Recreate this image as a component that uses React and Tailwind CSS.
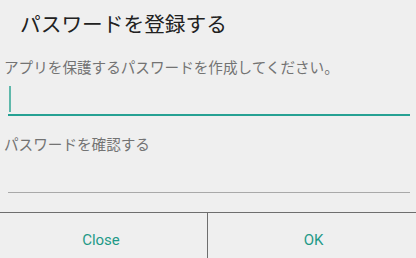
export default function App() {
  return (
    <div
      className="w-[416px] h-[258px] overflow-hidden bg-[#efefef] flex flex-col"
      style={{ fontFamily: '"Noto Sans CJK JP", "Noto Sans", sans-serif' }}
    >
      <div className="shrink-0 pl-[20px] pt-[9px] h-[57px] text-[20.7px] leading-[28px] text-[#212121]">
        パスワードを登録する
      </div>
      <div className="shrink-0 pl-[4px] h-[29px] text-[14.6px] leading-[20px] text-[#737373]">
        アプリを保護するパスワードを作成してください。
      </div>
      <div className="shrink-0 ml-[8px] mr-[6px] flex flex-col">
        <div className="h-[28px] flex items-start">
          <div className="ml-[1px] w-[2px] h-[26px] bg-[#5fb8ab]" />
        </div>
        <div className="h-[2px] bg-[#26a193]" />
      </div>
      <div className="shrink-0 pl-[4px] pt-[18px] h-[76px] text-[14.6px] leading-[20px] text-[#737373]">
        パスワードを確認する
      </div>
      <div className="shrink-0 ml-[8px] mr-[6px] h-px bg-[#a9a9a9]" />
      <div className="shrink-0 h-[19px]" />
      <div className="shrink-0 h-px bg-[#6e6e6e]" />
      <div
        className="shrink-0 flex h-[55px] text-[15px] text-[#1f9a88]"
        style={{ fontFamily: 'Roboto, "Liberation Sans", sans-serif' }}
      >
        <button className="w-[207px] flex items-center justify-center">
          <span className="mr-[5px]">Close</span>
        </button>
        <div className="w-px bg-[#6e6e6e]" />
        <button className="flex-1 flex items-center justify-center">
          <span className="ml-[3px]">OK</span>
        </button>
      </div>
    </div>
  );
}
